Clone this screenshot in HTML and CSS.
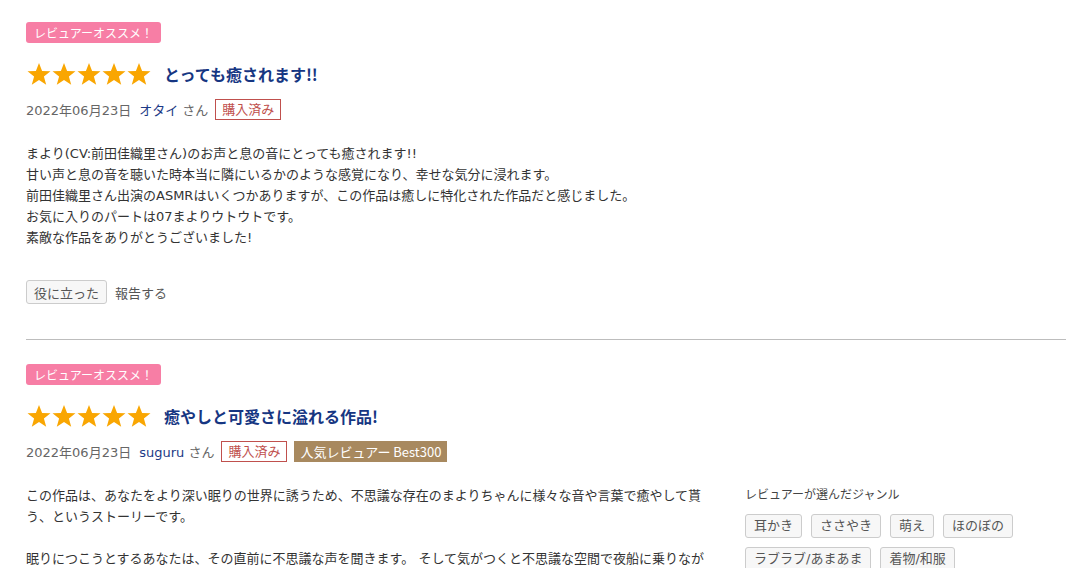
FILE: index.html
```html
<!DOCTYPE html>
<html lang="ja">
<head>
<meta charset="utf-8">
<link rel="stylesheet" href="styles.css">
</head>
<body>
<div class="reviews">
  <section class="review">
    <span class="pick">レビュアーオススメ！</span>
    <div class="head">
      <span class="stars">
        <svg viewBox="0 0 125 24" width="126" height="24"><defs><polygon id="s" points="12.5,1 15.6,8.9 24,9.3 17.4,14.6 19.7,22.8 12.5,18.1 5.3,22.8 7.6,14.6 1,9.3 9.4,8.9"/></defs><use href="#s" x="0"/><use href="#s" x="25"/><use href="#s" x="50"/><use href="#s" x="75"/><use href="#s" x="100"/></svg>
      </span>
      <h2 class="title">とっても癒されます!!</h2>
    </div>
    <div class="meta">
      <span class="date">2022年06月23日</span>
      <span class="who"><span class="name">オタイ</span> さん</span>
      <span class="bought">購入済み</span>
    </div>
    <div class="body">
      <p class="text">まより(CV:前田佳織里さん)のお声と息の音にとっても癒されます!!<br>甘い声と息の音を聴いた時本当に隣にいるかのような感覚になり、幸せな気分に浸れます。<br>前田佳織里さん出演のASMRはいくつかありますが、この作品は癒しに特化された作品だと感じました。<br>お気に入りのパートは07まよりウトウトです。<br>素敵な作品をありがとうございました!</p>
    </div>
    <div class="actions">
      <button class="helpful">役に立った</button>
      <span class="report">報告する</span>
    </div>
  </section>
  <section class="review">
    <span class="pick">レビュアーオススメ！</span>
    <div class="head">
      <span class="stars">
        <svg viewBox="0 0 125 24" width="126" height="24"><use href="#s" x="0"/><use href="#s" x="25"/><use href="#s" x="50"/><use href="#s" x="75"/><use href="#s" x="100"/></svg>
      </span>
      <h2 class="title">癒やしと可愛さに溢れる作品!</h2>
    </div>
    <div class="meta">
      <span class="date">2022年06月23日</span>
      <span class="who"><span class="name">suguru</span> さん</span>
      <span class="bought">購入済み</span>
      <span class="rank">人気レビュアー Best300</span>
    </div>
    <div class="body">
      <p class="text">この作品は、あなたをより深い眠りの世界に誘うため、不思議な存在のまよりちゃんに様々な音や言葉で癒やして貰う、というストーリーです。<br><br>眠りにつこうとするあなたは、その直前に不思議な声を聞きます。 そして気がつくと不思議な空間で夜船に乗りながら、まよりちゃんに出会います。</p>
      <div class="genres">
        <div class="genre-label">レビュアーが選んだジャンル</div>
        <div class="tags">
          <span class="tag">耳かき</span>
          <span class="tag">ささやき</span>
          <span class="tag">萌え</span>
          <span class="tag">ほのぼの</span>
          <span class="tag">ラブラブ/あまあま</span>
          <span class="tag">着物/和服</span>
        </div>
      </div>
    </div>
  </section>
</div>
</body>
</html>
```

FILE: styles.css
```css
html, body {
  margin: 0;
  padding: 0;
  background: #fff;
  overflow: hidden;
}
body {
  font-family: "DejaVu Sans", "Noto Sans CJK JP", sans-serif;
  font-size: 13px;
  color: #333;
}
.reviews {
  padding: 22px 0 0 26px;
}
.review {
  display: flex;
  flex-direction: column;
  align-items: flex-start;
  border-bottom: 1px solid #bdbdbd;
  padding-bottom: 35px;
  margin-bottom: 24px;
}
.pick {
  display: inline-block;
  height: 21px;
  line-height: 21px;
  padding: 0 8px;
  background: #f77ea5;
  color: #fff;
  font-size: 12px;
  border-radius: 3px;
  font-family: "Noto Sans CJK JP", sans-serif;
}
.head {
  display: flex;
  align-items: center;
  margin-top: 18px;
  height: 26px;
}
.stars {
  display: flex;
  fill: #f9a602;
}
.stars svg { display: block; }
.title {
  margin: 0 0 0 12px;
  font-size: 16px;
  font-weight: bold;
  color: #163682;
  line-height: 24px;
  font-family: "Noto Sans CJK JP", sans-serif;
}
.meta {
  display: flex;
  align-items: center;
  margin-top: 11px;
  height: 22px;
  color: #666;
}
.date { margin-right: 8px; }
.name { color: #1c3a86; }
.who { margin-right: 7px; }
.bought {
  display: inline-block;
  height: 19px;
  line-height: 19px;
  padding: 0 6px;
  border: 1px solid #c0504d;
  color: #c0504d;
}
.rank {
  display: inline-block;
  height: 21px;
  line-height: 21px;
  padding: 0 6px;
  margin-left: 7px;
  background: #a8895f;
  color: #fff;
  font-family: "Noto Sans CJK JP", sans-serif;
}
.body {
  display: flex;
  align-items: flex-start;
  margin-top: 23px;
  width: 100%;
}
.text {
  margin: 0;
  width: 685px;
  line-height: 21px;
  color: #333;
  flex: none;
}
.actions {
  display: flex;
  align-items: center;
  margin-top: 32px;
}
.helpful {
  font-family: inherit;
  font-size: 13px;
  color: #555;
  background: #f7f7f7;
  border: 1px solid #ccc;
  border-radius: 3px;
  height: 24px;
  padding: 0 7px;
  margin: 0 8px 0 0;
}
.report { color: #555; }
.genres {
  margin-left: 34px;
  margin-top: 2px;
}
.genre-label {
  color: #444;
  font-size: 12px;
  line-height: 17px;
  margin-bottom: 10px;
}
.tags {
  display: flex;
  flex-wrap: wrap;
  gap: 9px 9px;
  width: 300px;
}
.tag {
  display: inline-block;
  height: 22px;
  line-height: 22px;
  padding: 0 8px;
  border: 1px solid #ccc;
  border-radius: 3px;
  background: #f7f7f7;
  color: #555;
}
```
